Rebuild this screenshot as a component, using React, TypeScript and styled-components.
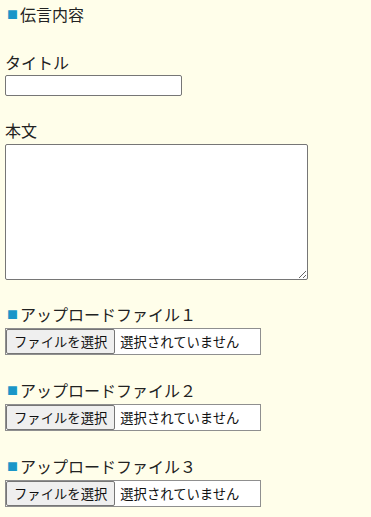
import React from 'react';
import styled, { createGlobalStyle } from 'styled-components';

const GlobalStyle = createGlobalStyle`
  html, body {
    margin: 0;
    background: #fffeea;
  }
  body {
    padding: 3px 5px;
    font-family: "Noto Sans CJK JP", "Noto Sans", sans-serif;
    font-size: 16px;
    line-height: 22px;
    color: #222;
  }
`;

const Form = styled.form`
  display: flex;
  flex-direction: column;
`;

const Heading = styled.div`
  display: flex;
  align-items: center;
  height: 22px;
  margin-bottom: 26px;
`;

const Mark = styled.span`
  color: #1a96c8;
  font-size: 11px;
  width: 13px;
  padding-left: 2px;
  line-height: 22px;
`;

const Field = styled.div<{ $gap?: number }>`
  display: flex;
  flex-direction: column;
  align-items: flex-start;
  margin-bottom: ${p => p.$gap ?? 23}px;
`;

const Label = styled.label<{ $space?: number }>`
  display: flex;
  align-items: center;
  height: 22px;
  margin-bottom: ${p => p.$space ?? 3}px;
`;

const TextInput = styled.input`
  box-sizing: border-box;
  width: 177px;
  height: 21px;
  margin: 0;
  border: 1px solid #767676;
  border-radius: 2px;
  background: #fff;
`;

const TextArea = styled.textarea`
  box-sizing: border-box;
  width: 303px;
  height: 136px;
  margin: 0;
  border: 1px solid #767676;
  border-radius: 2px;
  background: #fff;
`;

const FileBox = styled.div`
  box-sizing: border-box;
  display: flex;
  align-items: center;
  width: 256px;
  height: 27px;
  border: 1px solid #8f8f8f;
  background: #fff;
  font-size: 13.33px;
  color: #111;
`;

const FileButton = styled.button`
  box-sizing: border-box;
  height: 25px;
  padding: 0 7px;
  margin: 0 5px 0 0;
  border: 1px solid #767676;
  border-radius: 2px;
  background: #efefef;
  font-family: inherit;
  font-size: 13.33px;
  color: #111;
  line-height: 1;
`;

const files = ['１', '２', '３'];

export default function App() {
  return (
    <>
      <GlobalStyle />
      <Form>
        <Heading>
          <Mark>■</Mark>伝言内容
        </Heading>
        <Field>
          <Label $space={2}>タイトル</Label>
          <TextInput type="text" />
        </Field>
        <Field>
          <Label>本文</Label>
          <TextArea />
        </Field>
        {files.map((n, i) => (
          <Field key={n} $gap={i < 2 ? 24 : 0}>
            <Label>
              <Mark>■</Mark>アップロードファイル{n}
            </Label>
            <FileBox>
              <FileButton type="button">ファイルを選択</FileButton>
              選択されていません
            </FileBox>
          </Field>
        ))}
      </Form>
    </>
  );
}
